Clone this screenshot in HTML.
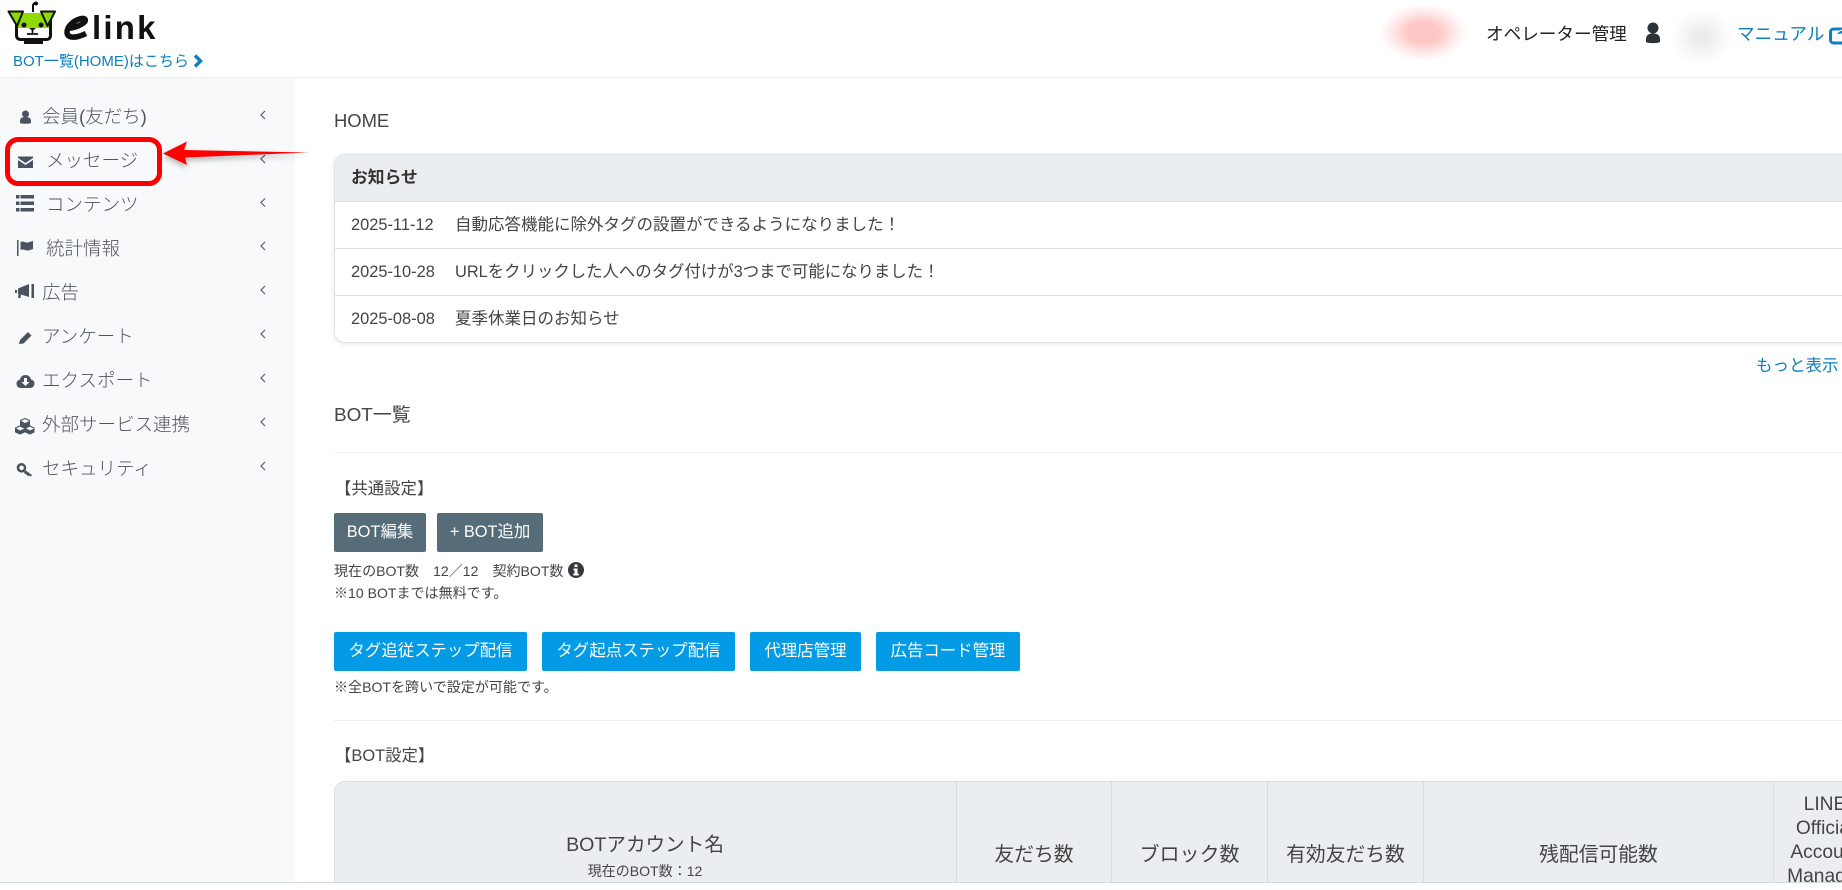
<!DOCTYPE html>
<html lang="ja"><head><meta charset="utf-8"><title>elink</title>
<style>
html,body{margin:0;padding:0;width:1842px;height:890px;overflow:hidden;background:#fff}
body{position:relative;font-family:"Liberation Sans","Noto Sans CJK JP",sans-serif;color:#444;font-size:16.4px}
.t{position:absolute;white-space:nowrap;line-height:24px;height:24px}
.abs{position:absolute}
svg.abs{overflow:visible}
.side{color:#50565f;font-size:18.5px;font-weight:300}
.btn{position:absolute;color:#fff;text-align:center;line-height:39px;height:39px;border-radius:2px;font-size:16.4px;white-space:nowrap}
.g{background:#566d79}.b{background:#039be5}
.sm{font-size:14.05px;color:#444}
.lnk{color:#0d7ebf}
.row{position:absolute;left:0;right:0;height:46px;border-bottom:1px solid #dcdfe2}
.th{position:absolute;text-align:center;white-space:nowrap;line-height:24px;font-size:20px;color:#444}
</style></head><body>

<!-- header -->
<div class="abs" style="left:0;top:77px;width:1842px;height:1px;background:#eceef0"></div>
<svg class="abs" style="left:0;top:0" width="60" height="46" viewBox="0 0 60 46">
<path d="M33 12V6c0-2 1-3 3-3" fill="none" stroke="#111" stroke-width="2"/><circle cx="36" cy="3.500" r="2" fill="#111"/>
<rect x="24" y="39" width="19" height="5" fill="#111"/>
<path d="M15 14h37v21c0 4-2 6-6 6H21c-4 0-6-2-6-6z" fill="#111"/>
<path d="M18 13h31v15H18z" fill="#8edb00"/><path d="M18 28h31v7c0 2-1 3-3 3H21c-2 0-3-1-3-3z" fill="#fff"/>
<path d="M8.500 11.500H23L17 26z" fill="#8edb00" stroke="#111" stroke-width="2" stroke-linejoin="round"/>
<path d="M55 11.500H41L47.500 26z" fill="#8edb00" stroke="#111" stroke-width="2" stroke-linejoin="round"/>
<circle cx="24" cy="25" r="2.500" fill="#111"/><circle cx="41" cy="25" r="2.500" fill="#111"/>
<path d="M29 28h7l-3.500 3z" fill="#111"/><path d="M32.500 30v3M27 34h11" stroke="#111" stroke-width="1.700" fill="none"/>
</svg>
<svg class="abs" style="left:62px;top:12px" width="96" height="30" viewBox="0 0 96 30">
<path d="M4 16.500C13 16 20 13 23 9.500 24.500 7 21.500 5.500 17.500 7 10 9.500 5 15 5 20.500c0 5.500 8 6.500 19 1" fill="none" stroke="#111" stroke-width="5.500"/>
<text x="30" y="27" font-family="Liberation Sans,sans-serif" font-weight="700" font-size="33" letter-spacing="2.200" fill="#111">link</text>
</svg>
<div class="t lnk" style="left:13px;top:50px;font-size:15px">BOT一覧(HOME)はこちら</div>
<svg class="abs" style="left:192px;top:54px" width="12" height="14" viewBox="0 0 12 14"><path d="M3 1.500 8.500 7 3 12.500" fill="none" stroke="#0d7ebf" stroke-width="3.400"/></svg>

<div class="abs" style="left:1380px;top:4px;width:87px;height:57px;background:radial-gradient(ellipse 44px 29px at center,#ffc6c6 35%,#ffe4e4 65%,#fff 100%)"></div>
<div class="t" style="left:1486px;top:22px;font-size:17.6px;color:#222">オペレーター管理</div>
<svg class="abs" style="left:1645px;top:22px" width="16" height="22" viewBox="0 0 16 22"><circle cx="8" cy="6" r="5.500" fill="#2c3338"/><path d="M1 20v-3c0-4 3-5.500 7-5.500s7 1.500 7 5.500v3c-2 1.500-12 1.500-14 0z" fill="#2c3338"/></svg>
<div class="abs" style="left:1672px;top:10px;width:60px;height:55px;background:radial-gradient(ellipse 32px 29px at center,#ececec 20%,#f7f7f7 60%,#fff 100%)"></div>
<div class="t lnk" style="left:1737px;top:22px;font-size:17.6px">マニュアル</div>
<svg class="abs" style="left:1829px;top:25px" width="20" height="20" viewBox="0 0 20 20"><rect x="1.500" y="4" width="17" height="14" rx="3" fill="none" stroke="#0d7ebf" stroke-width="3"/><path d="M7 11c1-4 4-6 7-6V2l6 5-6 5V9c-3 0-5 0-7 2z" fill="#0d7ebf" stroke="#fff" stroke-width="1"/></svg>

<!-- sidebar -->
<div class="abs" style="left:0;top:78px;width:295px;height:804px;background:#f8f9fb"></div>
<div class="t side" style="left:42px;top:105px">会員(友だち)</div>
<div class="t side" style="left:46px;top:149px">メッセージ</div>
<div class="t side" style="left:46px;top:193px">コンテンツ</div>
<div class="t side" style="left:46px;top:237px">統計情報</div>
<div class="t side" style="left:42px;top:281px">広告</div>
<div class="t side" style="left:42px;top:325px">アンケート</div>
<div class="t side" style="left:42px;top:369px">エクスポート</div>
<div class="t side" style="left:42px;top:413px">外部サービス連携</div>
<div class="t side" style="left:42px;top:457px">セキュリティ</div>

<svg class="abs" style="left:0;top:0" width="295" height="500" fill="#4a5360">
<g fill="none" stroke="#555c66" stroke-width="1.200">
<path d="M265 111l-4 4 4 4M265 155l-4 4 4 4M265 198.500l-4 4 4 4M265 242l-4 4 4 4M265 286l-4 4 4 4M265 330l-4 4 4 4M265 374l-4 4 4 4M265 418l-4 4 4 4M265 462l-4 4 4 4"/>
</g>
<!-- user -->
<circle cx="25.500" cy="114" r="3.500"/><path d="M20 123v-2c0-3 2-4 5.500-4s5.500 1 5.500 4v2c-2 1-9 1-11 0z"/>
<!-- envelope -->
<path d="M18 156.500h15v1.500l-7.500 5-7.500-5z"/><path d="M18 160v8h15v-8l-7.500 5z"/>
<!-- list -->
<path d="M16 195h3.500v3.500H16zM20.500 195H34v3.500H20.500zM16 201.500h3.500v3.500H16zM20.500 201.500H34v3.500H20.500zM16 208h3.500v3.500H16zM20.500 208H34v3.500H20.500z"/>
<!-- flag -->
<path d="M17 240h1.500v16H17zM20.500 242c3-1.500 4.500 1 7 .5 2-.3 3.500-1 5.500-1.500v8c-2 .5-3.500 1.500-5.500 1.500-2.500 0-4-2-7-.5z"/>
<!-- bullhorn -->
<path d="M15 290h2v3h-2zM18 288.500l11-4.500v13l-8-2.500-.5 3.500h-2.500l.5-4h-.5zM31.500 284H34v14h-2.500z"/>
<!-- pencil -->
<path d="M19 344l1-4 8-8 3.500 3.500-8 8z"/>
<!-- cloud -->
<path d="M21 388c-3 0-4.500-2-4.500-4.500 0-2 1.500-3.500 3.500-4 .5-3 3-4.500 5.500-4.500 3 0 5 2 5.500 4.500 2 .5 3.500 2 3.500 4 0 2.500-2 4.500-4.500 4.500z"/>
<path d="M24 378h3v4h2.500l-4 4-4-4H24z" fill="#f8f9fb"/>
<!-- cubes -->
<g stroke="#4a5360" stroke-width="1" fill="#f8f9fb" stroke-linejoin="round">
<path d="M25 418.500l4.500 2v5l-4.500 2-4.500-2v-5z"/><path d="M20 426l4.500 2v4l-4.500 2-4.500-2v-4z"/><path d="M30 426l4 2v4l-4 2-4.500-2v-4z"/>
</g>
<path d="M25 423l4.500-2v4.500l-4.500 2zM20 430.500l4.500-2v3.500l-4.500 2zM30 430.500l4-2v3.500l-4 2z"/>
<path d="M15.500 428l4.500 2.500v3.500l-4.500-2zM25.500 428l4.500 2.500v3.500l-4.500-2zM20.500 420.500l4.500 2.500v4.500l-4.500-2z"/>
<!-- key -->
<path d="M23 463.500a4.800 4.800 0 1 1-.1 9.600 4.800 4.800 0 0 1 .1-9.600zm0 2.500a2.300 2.300 0 1 0 .1 4.600 2.300 2.300 0 0 0-.1-4.600z" fill-rule="evenodd" transform="translate(-1.500 -.5)"/>
<path d="M25 470l7 5-1 1.500-2-1-1 1-1-1.500-3-2z"/>
</svg>

<!-- annotation -->
<div class="abs" style="left:5px;top:137px;width:147px;height:39px;border:5px solid #f00;border-radius:13px;background:transparent"></div>
<svg class="abs" style="left:160px;top:136px;filter:drop-shadow(0 3px 3px rgba(0,0,0,.28))" width="155" height="36" viewBox="0 0 155 36"><path d="M3 17.500 27 5.500 24 14 149 16.500 25 21.500 27 29z" fill="#f00"/></svg>

<!-- main -->
<div class="t" style="left:334px;top:109px;font-size:18.4px">HOME</div>

<div class="abs" style="left:334px;top:154px;width:1560px;height:189px;border:1px solid #dfe1e3;border-radius:11px;box-shadow:0 1px 5px rgba(0,0,0,.1);overflow:hidden;box-sizing:border-box;background:#fff">
  <div class="row" style="top:0;height:46px;background:#ebeef1"></div>
  <div class="row" style="top:47px"></div>
  <div class="row" style="top:94px;"></div>
  <div class="t" style="left:16px;top:11px;font-weight:700;color:#333;font-size:16.8px">お知らせ</div>
  <div class="t" style="left:16px;top:58px">2025-11-12</div>
  <div class="t" style="left:120px;top:58px;font-size:16.5px">自動応答機能に除外タグの設置ができるようになりました！</div>
  <div class="t" style="left:16px;top:105px">2025-10-28</div>
  <div class="t" style="left:120px;top:105px">URLをクリックした人へのタグ付けが3つまで可能になりました！</div>
  <div class="t" style="left:16px;top:152px">2025-08-08</div>
  <div class="t" style="left:120px;top:152px;font-size:16.5px">夏季休業日のお知らせ</div>
</div>

<div class="t lnk" style="left:1756px;top:354px;font-size:16.5px">もっと表示</div>

<div class="t" style="left:334px;top:404px;font-size:18.9px">BOT一覧</div>
<div class="abs" style="left:334px;top:452px;width:1508px;height:1px;background:#eceef0"></div>

<div class="t" style="left:335px;top:477px">【共通設定】</div>
<div class="btn g" style="left:334px;top:513px;width:92px">BOT編集</div>
<div class="btn g" style="left:437px;top:513px;width:106px">+ BOT追加</div>
<div class="t sm" style="left:334px;top:559px">現在のBOT数　12／12　契約BOT数</div>
<svg class="abs" style="left:568px;top:562px" width="16" height="16" viewBox="0 0 16 16"><circle cx="8" cy="8" r="8" fill="#343a40"/><rect x="6.500" y="2.500" width="3" height="2.600" fill="#fff"/><path d="M5.500 6.500h4v5h1.200v2H5.300v-2h1.300v-3H5.500z" fill="#fff"/></svg>
<div class="t sm" style="left:334px;top:581px">※10 BOTまでは無料です。</div>

<div class="btn b" style="left:334px;top:632px;width:193px">タグ追従ステップ配信</div>
<div class="btn b" style="left:542px;top:632px;width:193px">タグ起点ステップ配信</div>
<div class="btn b" style="left:750px;top:632px;width:111px">代理店管理</div>
<div class="btn b" style="left:876px;top:632px;width:144px">広告コード管理</div>
<div class="t sm" style="left:334px;top:675px">※全BOTを跨いで設定が可能です。</div>

<div class="abs" style="left:334px;top:720px;width:1508px;height:1px;background:#eceef0"></div>
<div class="t" style="left:335px;top:744px">【BOT設定】</div>

<!-- table head -->
<div class="abs" style="left:334px;top:781px;width:1560px;height:102px;background:#ebeef1;border:1px solid #dcdfe2;border-bottom:0;border-radius:11px 11px 0 0;box-sizing:border-box"></div>
<div class="abs" style="left:956px;top:781px;width:1px;height:101px;background:#d9dcdf"></div>
<div class="abs" style="left:1111px;top:781px;width:1px;height:101px;background:#d9dcdf"></div>
<div class="abs" style="left:1267px;top:781px;width:1px;height:101px;background:#d9dcdf"></div>
<div class="abs" style="left:1423px;top:781px;width:1px;height:101px;background:#d9dcdf"></div>
<div class="abs" style="left:1773px;top:781px;width:1px;height:101px;background:#d9dcdf"></div>

<div class="th" style="left:334px;width:622px;top:833px;font-size:19.6px">BOTアカウント名</div>
<div class="th" style="left:334px;width:622px;top:859px;font-size:14.05px">現在のBOT数：12</div>
<div class="th" style="left:957px;width:154px;top:843px;font-size:19.8px">友だち数</div>
<div class="th" style="left:1112px;width:155px;top:843px">ブロック数</div>
<div class="th" style="left:1268px;width:155px;top:843px;font-size:19.8px">有効友だち数</div>
<div class="th" style="left:1424px;width:349px;top:843px;font-size:19.8px">残配信可能数</div>
<div class="abs" style="left:1774px;top:781px;width:68px;height:101px;overflow:hidden">
  <div class="th" style="left:-14px;width:130px;top:12px;font-size:19.2px">LINE<br>Official<br>Account<br>Manager</div>
</div>

<div class="abs" style="left:0;top:882px;width:1842px;height:8px;background:#fff;border-top:1px solid #d5d9df;box-sizing:border-box"></div>
</body></html>
